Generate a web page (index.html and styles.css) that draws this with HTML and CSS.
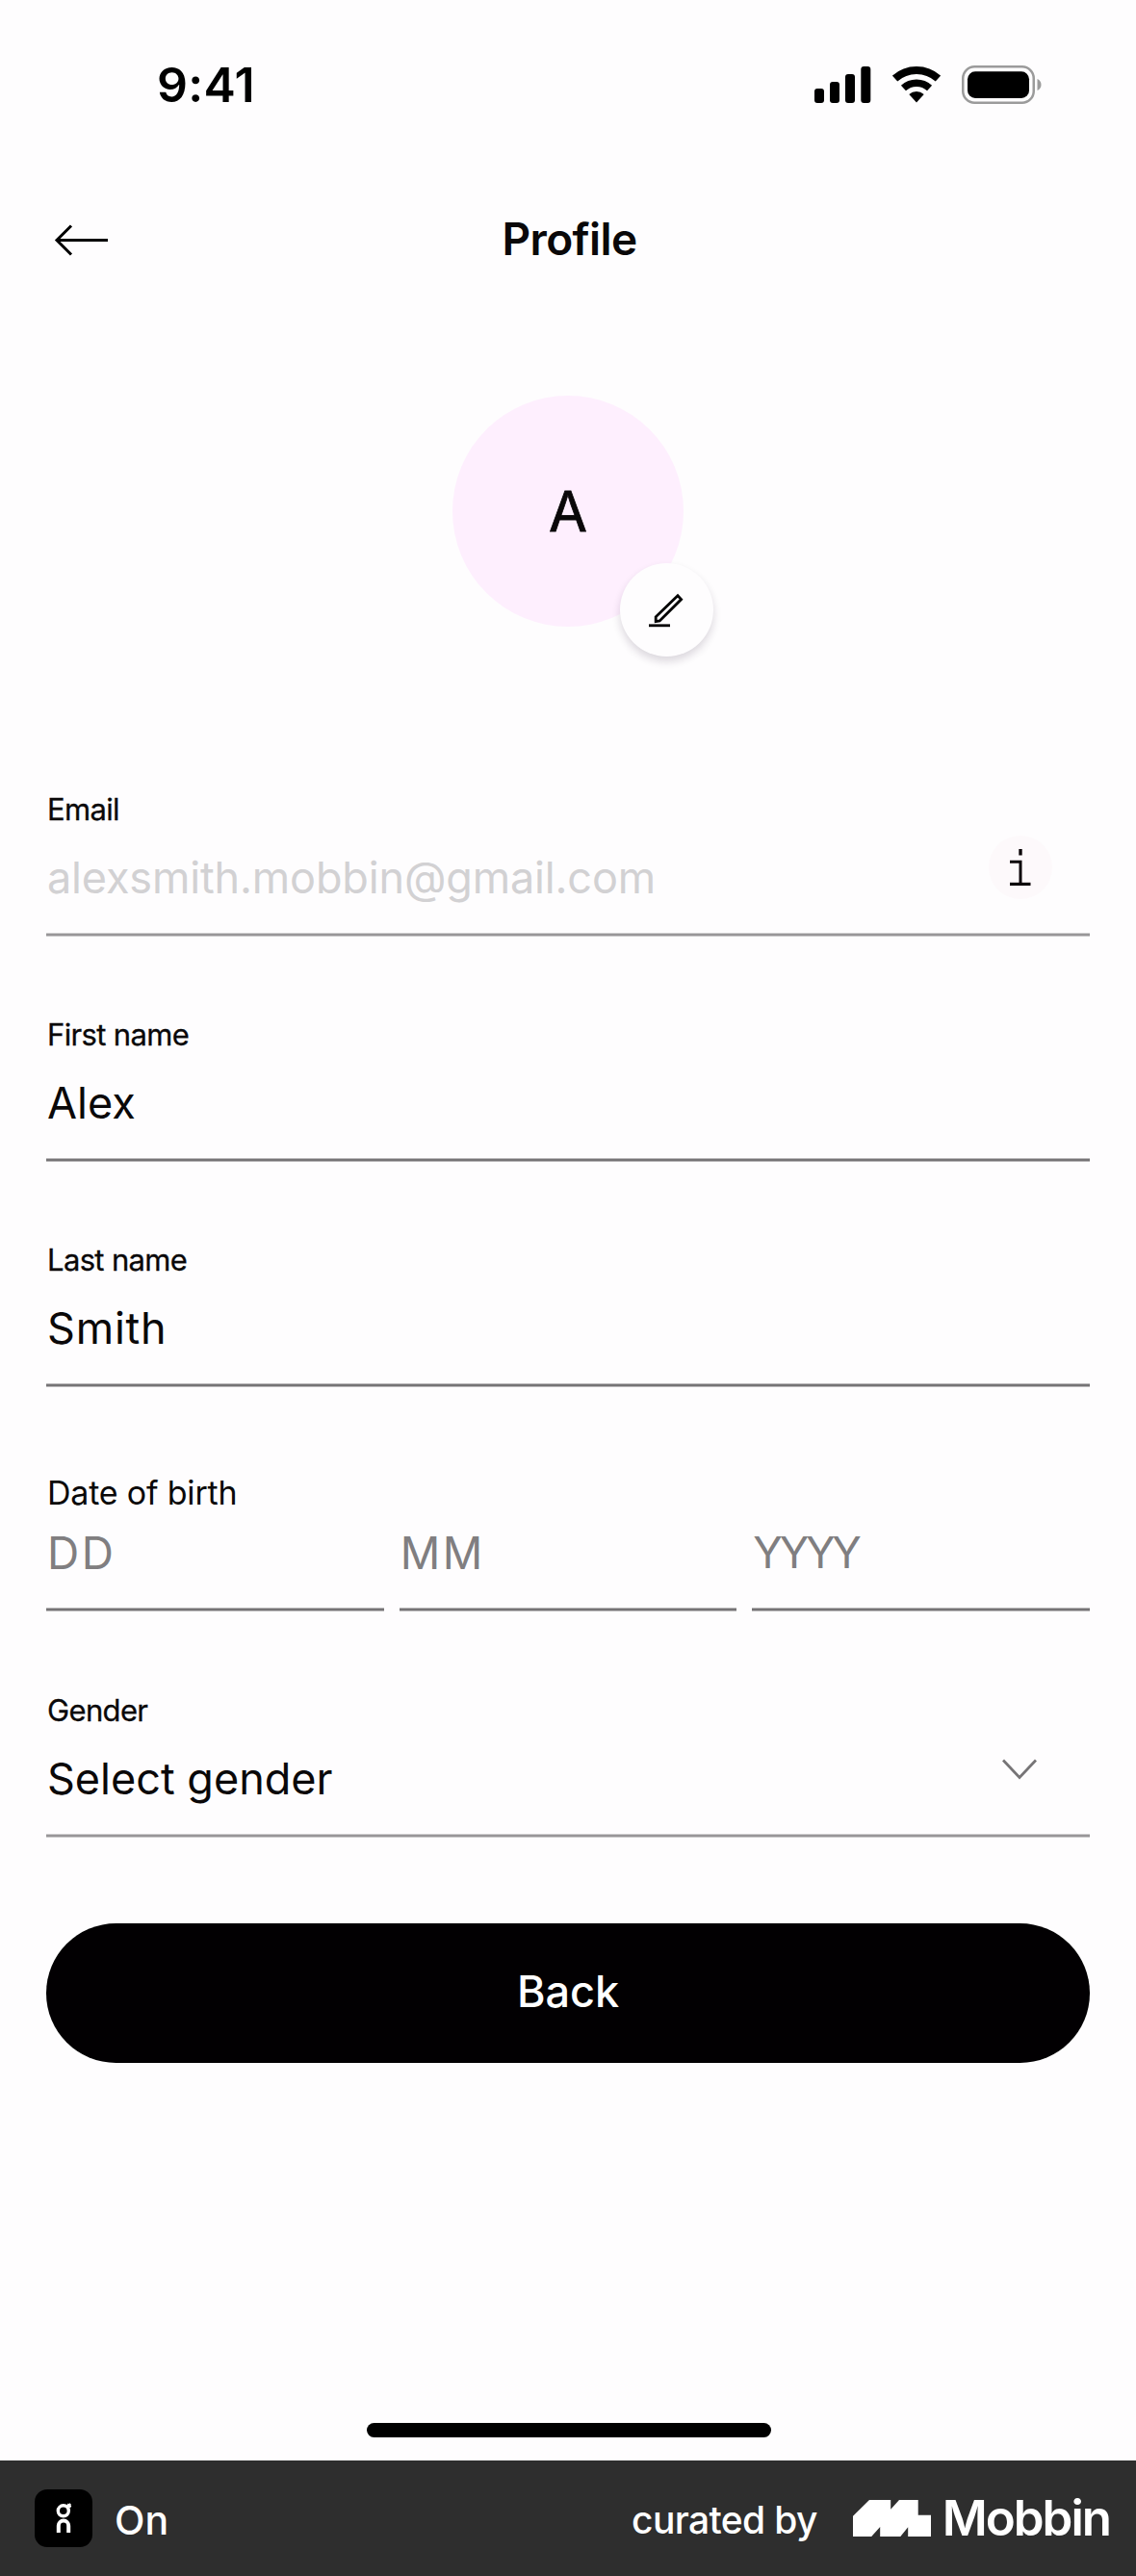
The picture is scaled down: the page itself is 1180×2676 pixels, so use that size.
FILE: index.html
```
<!DOCTYPE html>
<html lang="en">
<head>
<meta charset="utf-8">
<title>Profile</title>
<link rel="stylesheet" href="styles.css">
</head>
<body>
<div class="screen">
  <div class="status-bar">
    <span class="status-time">9:41</span>
    <div class="status-icons">
      <svg width="59" height="40" viewBox="0 0 59 40">
        <rect x="0" y="24" width="10" height="15" rx="3"/>
        <rect x="16" y="17" width="10" height="22" rx="3"/>
        <rect x="32" y="9" width="10" height="30" rx="3"/>
        <rect x="48.300" y="1" width="10" height="38" rx="3"/>
      </svg>
      <svg width="50" height="38" viewBox="0 0 50 38">
        <path d="M2.600 12.600A33.500 33.500 0 0 1 47.400 12.600" fill="none" stroke="#000" stroke-width="8"/>
        <path d="M11.450 22.450A20.250 20.250 0 0 1 38.550 22.450" fill="none" stroke="#000" stroke-width="7.500"/>
        <path d="M17.300 29A11.500 11.500 0 0 1 32.700 29L25 37.500Z"/>
      </svg>
      <svg width="83" height="40" viewBox="0 0 83 40">
        <rect x="1.250" y="1.250" width="73.500" height="37.500" rx="12" fill="none" stroke="#9b9b9b" stroke-width="2.500"/>
        <rect x="6" y="6.300" width="64" height="27.600" rx="8"/>
        <path d="M78.500 14Q82.500 15.800 82.500 20T78.500 26Z" fill="#9b9b9b"/>
      </svg>
    </div>
  </div>

  <header class="header">
    <svg class="back-arrow" width="56" height="34" viewBox="0 0 56 34" fill="none" stroke="#000" stroke-width="3">
      <path d="M56 16.500H3M18 1.500 3 16.500l15 15"/>
    </svg>
    <h1 class="title">Profile</h1>
  </header>

  <div class="avatar">
    <span class="avatar-initial">A</span>
    <button class="edit-button" aria-label="Edit picture">
      <svg width="36" height="36" viewBox="0 0 36 36" fill="none" stroke="#000" stroke-width="2.800">
        <path d="M0 33.800H22"/>
        <path d="M7.200 29.700V24.800L30 2.700 33.600 6.600 11.200 29Z"/>
      </svg>
    </button>
  </div>

  <form class="form">
    <div class="field">
      <label class="label">Email</label>
      <div class="control control-muted">
        <span class="value value-disabled">alexsmith.mobbin@gmail.com</span>
        <span class="info">
          <svg width="22" height="38" viewBox="0 0 22 38" fill="none" stroke="#0c0508">
            <path d="M11 0v6.500" stroke-width="3.400"/>
            <path d="M0 13.200h11v23" stroke-width="3"/>
            <path d="M0 36.400h21.500" stroke-width="3.200"/>
          </svg>
        </span>
      </div>
    </div>

    <div class="field">
      <label class="label">First name</label>
      <div class="control"><span class="value">Alex</span></div>
    </div>

    <div class="field">
      <label class="label">Last name</label>
      <div class="control"><span class="value value-wide">Smith</span></div>
    </div>

    <div class="field field-date">
      <label class="label label-date">Date of birth</label>
      <div class="date-row">
        <div class="control control-date"><span class="value placeholder">DD</span></div>
        <div class="control control-date"><span class="value placeholder">MM</span></div>
        <div class="control control-date"><span class="value placeholder placeholder-year">YYYY</span></div>
      </div>
    </div>

    <div class="field">
      <label class="label">Gender</label>
      <div class="control control-muted">
        <span class="value">Select gender</span>
        <svg class="chevron" width="36" height="22" viewBox="0 0 36 22" fill="none" stroke="#767476" stroke-width="2.800">
          <path d="M1 1.500 18 19.500 35 1.500"/>
        </svg>
      </div>
    </div>

    <button type="button" class="submit">Back</button>
  </form>

  <div class="home-indicator"></div>

  <footer class="footer">
    <div class="app">
      <svg class="app-icon" width="60" height="60" viewBox="0 0 60 60" fill="none" stroke="#fff">
        <rect width="60" height="60" rx="13" fill="#000" stroke="none"/>
        <circle cx="29.800" cy="22.300" r="5.500" stroke-width="3.400"/>
        <path d="M33.500 18.500 37.300 15.200M34 15.500l3.500 3" stroke-width="2.400"/>
        <path d="M24.800 45v-7.200a5.200 5.200 0 0 1 10.400 0V45" stroke-width="4"/>
      </svg>
      <span class="app-name">On</span>
    </div>
    <div class="credit">
      <span class="credit-text">curated by</span>
      <svg width="81" height="38" viewBox="0 0 81 38" fill="#fff">
        <path d="M0 16.700 17 0H39.200V9.700L48 0H67.700V15.700H81V38H57.200V28.300L49.300 38H28.200V28L19.200 38H0Z"/>
      </svg>
      <span class="brand">Mobbin</span>
    </div>
  </footer>
</div>
</body>
</html>
```
FILE: styles.css
```
* {
  box-sizing: border-box;
}

body {
  margin: 0;
  font-family: Inter, "Liberation Sans", sans-serif;
  color: #0a0809;
}

svg {
  display: block;
  flex: none;
}

.screen {
  display: flex;
  flex-direction: column;
  width: 1180px;
  height: 2676px;
  background: #fefdfe;
}

.status-bar {
  display: flex;
  justify-content: space-between;
  align-items: center;
  height: 60px;
  margin-top: 58px;
  padding: 0 98px 0 163px;
}

.status-time {
  font-size: 50px;
  font-weight: 600;
  line-height: 60px;
  letter-spacing: 0.3px;
  color: #000;
}

.status-icons {
  display: flex;
  align-items: center;
  gap: 22px;
}

.header {
  display: grid;
  grid-template-columns: 112px 1fr 112px;
  align-items: center;
  height: 60px;
  margin-top: 100px;
}

.back-arrow {
  justify-self: end;
  margin-top: 3px;
}

.title {
  margin: 0;
  padding-left: 3px;
  font-size: 46px;
  font-weight: 600;
  line-height: 60px;
  letter-spacing: -0.6px;
  text-align: center;
}

.avatar {
  position: relative;
  display: flex;
  align-items: center;
  justify-content: center;
  align-self: center;
  width: 240px;
  height: 240px;
  margin-top: 133px;
  border-radius: 50%;
  background: #feeffe;
}

.avatar-initial {
  font-size: 58px;
  line-height: 70px;
  -webkit-text-stroke: 0.8px currentColor;
}

.edit-button {
  position: absolute;
  right: -31px;
  bottom: -31px;
  display: flex;
  align-items: center;
  justify-content: center;
  width: 97px;
  height: 97px;
  padding: 0 2px 0 0;
  border: 0;
  border-radius: 50%;
  background: #fefdfe;
  box-shadow: 0 5px 8px rgba(40, 20, 50, 0.16);
}

.form {
  display: flex;
  flex-direction: column;
  gap: 81px;
  margin-top: 170px;
  padding: 0 48px;
}

.field {
  display: flex;
  flex-direction: column;
}

.label {
  padding-left: 1px;
  font-size: 31px;
  line-height: 40px;
  letter-spacing: -0.65px;
  -webkit-text-stroke: 0.3px currentColor;
}

.control {
  display: flex;
  justify-content: space-between;
  align-items: flex-start;
  height: 113px;
  margin-top: -1px;
  margin-bottom: 1px;
  padding-right: 39px;
  border-bottom: 1px solid #b9b7b9;
  box-shadow: inset 0 -2px #767476, inset 0 -3px #b9b7b9;
}

.control-muted {
  border-bottom-color: #cccbcc;
  box-shadow: inset 0 -2px #989698, inset 0 -3px #cccbcc;
}

.value {
  margin-top: 24px;
  padding-left: 1px;
  font-size: 45px;
  line-height: 56px;
}

.value-disabled {
  letter-spacing: -0.15px;
  color: #d2d1d3;
}

.value-wide {
  letter-spacing: 0.8px;
}

.info {
  display: flex;
  align-items: center;
  justify-content: center;
  width: 66px;
  height: 66px;
  margin-top: 8px;
  border-radius: 50%;
  background: #fdf9fb;
}

.field-date {
  margin-top: 6px;
  margin-bottom: 1px;
}

.label-date {
  font-size: 34px;
  line-height: 44px;
  letter-spacing: -0.2px;
  -webkit-text-stroke: 0;
}

.date-row {
  display: grid;
  grid-template-columns: repeat(3, 1fr);
  gap: 16px;
}

.control-date {
  height: 102px;
  padding: 0;
}

.placeholder {
  margin-top: 13px;
  font-size: 46px;
  color: #807e80;
  letter-spacing: 2.500px;
}

.placeholder-year {
  font-size: 45px;
  letter-spacing: -3.2px;
}

.chevron {
  margin: 31px 16px 0 0;
}

.submit {
  height: 145px;
  margin-top: 7px;
  padding: 0 0 3px;
  border: 0;
  border-radius: 73px;
  background: #020002;
  color: #fff;
  font: 500 45px/60px Inter, "Liberation Sans", sans-serif;
}

.home-indicator {
  align-self: center;
  width: 420px;
  height: 15px;
  margin-top: auto;
  margin-bottom: 24px;
  margin-left: 2px;
  border-radius: 8px;
  background: #000;
}

.footer {
  display: flex;
  align-items: center;
  justify-content: space-between;
  height: 120px;
  padding: 0 27px 0 36px;
  background: #2e2e2e;
  color: #fff;
}

.app,
.credit {
  display: flex;
  align-items: center;
}

.app {
  gap: 23px;
}

.app-name,
.credit-text {
  padding-top: 3px;
  font-size: 39px;
  font-weight: 500;
  line-height: 48px;
}

.app-name {
  font-size: 41px;
  letter-spacing: 0;
}

.credit-text {
  margin-right: 37px;
  letter-spacing: -0.65px;
}

.brand {
  margin-left: 12px;
  font-size: 51px;
  font-weight: 600;
  line-height: 60px;
  letter-spacing: -2px;
}
```
